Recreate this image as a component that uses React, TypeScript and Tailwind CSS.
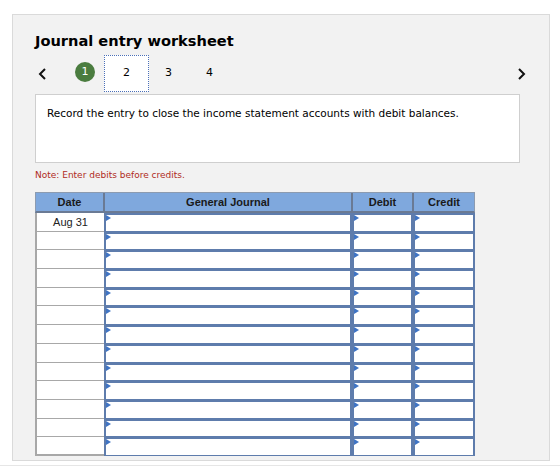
import React from "react";

const rows = 13;

function Flag() {
  return (
    <span className="absolute left-0 top-0 w-0 h-0 border-t-[3px] border-b-[3px] border-l-[5px] border-t-transparent border-b-transparent border-l-[#3f74c4]" />
  );
}

function InputCell({ w }: { w: string }) {
  return (
    <div className={`relative ${w} h-full bg-white border-l-2 border-r-2 border-t-2 border-b border-[#5e7cac]`}>
      <Flag />
    </div>
  );
}

export default function App() {
  return (
    <div className="w-[560px] h-[467px] bg-white relative overflow-hidden" style={{ fontFamily: "'DejaVu Sans', Verdana, sans-serif" }}>
      <div className="absolute left-0 right-0 top-[465px] h-px bg-[#e6e6e6]" />
      <div className="ml-[12px] mt-[14px] w-[538px] h-[447px] bg-[#f2f2f2] border border-[#dadada] pl-[22px] relative">
        <div className="pt-[17px] text-[14.6px] font-bold text-black leading-[18px]">Journal entry worksheet</div>
        <div className="relative h-[34px] mt-[7px] flex items-center text-[11px] text-black">
          <svg className="absolute left-[3px] top-[11px]" width="9" height="12" viewBox="0 0 9 12">
            <path d="M7 1 L2 6 L7 11" fill="none" stroke="#111" strokeWidth="2" />
          </svg>
          <div className="absolute left-[40px] top-[5px] w-[20px] h-[20px] rounded-full bg-[#4a7c3f] text-white text-[11px] flex items-center justify-center">1</div>
          <div className="absolute left-[69px] top-[-2px] w-[45px] h-[37px] bg-white border border-dotted border-[#4a6fb8] flex items-center justify-center z-10">2</div>
          <div className="absolute left-[130px] top-[8px]">3</div>
          <div className="absolute left-[171px] top-[8px]">4</div>
          <svg className="absolute left-[482px] top-[11px]" width="9" height="12" viewBox="0 0 9 12">
            <path d="M2 1 L7 6 L2 11" fill="none" stroke="#111" strokeWidth="2" />
          </svg>
        </div>
        <div className="mt-[3px] w-[485px] h-[69px] bg-white border border-[#cfcfcf] px-[11px] pt-[11px] text-[10.5px] text-black leading-[14px]">
          Record the entry to close the income statement accounts with debit balances.
        </div>
        <div className="mt-[6px] text-[9px] text-[#b02a22] leading-[12px]">Note: Enter debits before credits.</div>
        <div className="mt-[11px] w-[440px]" style={{ fontFamily: "'Liberation Sans', Arial, sans-serif" }}>
          <div className="flex h-[21px] bg-[#7fa8dd] border border-[#8c9bb0] border-b-2 border-b-[#6a7a94] text-[11px] font-bold text-[#1a1a1a]">
            <div className="w-[69px] flex items-center justify-center border-r-2 border-[#6a7a94]">Date</div>
            <div className="w-[248px] flex items-center justify-center border-r-2 border-[#6a7a94]">General Journal</div>
            <div className="w-[61px] flex items-center justify-center border-r-2 border-[#6a7a94]">Debit</div>
            <div className="flex-1 flex items-center justify-center">Credit</div>
          </div>
          {Array.from({ length: rows }).map((_, i) => (
            <div key={i} className="flex h-[18.7px]">
              <div className={`w-[69px] h-full bg-white border-l-2 border-b border-[#a8a8a8] ${i === rows - 1 ? "border-b-2" : ""} flex items-center justify-center text-[11px] text-[#222]`}>
                {i === 0 ? "Aug 31" : ""}
              </div>
              <InputCell w="w-[248px]" />
              <InputCell w="w-[61px]" />
              <InputCell w="w-[62px]" />
            </div>
          ))}
        </div>
      </div>
    </div>
  );
}
